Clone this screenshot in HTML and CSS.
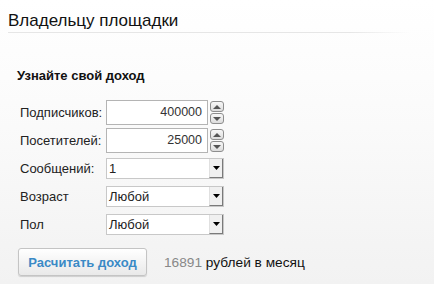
FILE: index.html
```html
<!DOCTYPE html>
<html lang="ru">
<head>
<meta charset="utf-8">
<link rel="stylesheet" href="styles.css">
</head>
<body>
<div class="page">
  <h1 class="title">Владельцу площадки</h1>
  <div class="sep"></div>
  <div class="calc">
    <h2 class="subtitle">Узнайте свой доход</h2>
    <div class="form">
      <div class="row">
        <span class="label">Подписчиков:</span>
        <div class="field">
          <div class="input">400000</div>
          <div class="spin">
            <span class="sbtn"><svg width="8" height="4" viewBox="0 0 8 4"><path d="M0 4 L4 0 L8 4 Z" fill="#555"/></svg></span>
            <span class="sbtn"><svg width="8" height="4" viewBox="0 0 8 4"><path d="M0 0 L4 4 L8 0 Z" fill="#555"/></svg></span>
          </div>
        </div>
      </div>
      <div class="row">
        <span class="label">Посетителей:</span>
        <div class="field">
          <div class="input">25000</div>
          <div class="spin">
            <span class="sbtn"><svg width="8" height="4" viewBox="0 0 8 4"><path d="M0 4 L4 0 L8 4 Z" fill="#555"/></svg></span>
            <span class="sbtn"><svg width="8" height="4" viewBox="0 0 8 4"><path d="M0 0 L4 4 L8 0 Z" fill="#555"/></svg></span>
          </div>
        </div>
      </div>
      <div class="row">
        <span class="label">Сообщений:</span>
        <div class="select"><span class="val v1">1</span><span class="arrow"><svg width="7" height="4" viewBox="0 0 7 4"><path d="M0 0 L7 0 L3.5 4 Z" fill="#000"/></svg></span></div>
      </div>
      <div class="row">
        <span class="label">Возраст</span>
        <div class="select"><span class="val">Любой</span><span class="arrow"><svg width="7" height="4" viewBox="0 0 7 4"><path d="M0 0 L7 0 L3.5 4 Z" fill="#000"/></svg></span></div>
      </div>
      <div class="row">
        <span class="label">Пол</span>
        <div class="select"><span class="val">Любой</span><span class="arrow"><svg width="7" height="4" viewBox="0 0 7 4"><path d="M0 0 L7 0 L3.5 4 Z" fill="#000"/></svg></span></div>
      </div>
    </div>
    <div class="result">
      <button class="btn">Расчитать доход</button>
      <span class="sum"><span class="num">16891</span> рублей в месяц</span>
    </div>
  </div>
</div>
</body>
</html>
```
FILE: styles.css
```css
html, body {
  margin: 0;
  padding: 0;
}
body {
  width: 434px;
  height: 284px;
  background: linear-gradient(to bottom, #ffffff 0%, #fafafa 45%, #f2f2f2 100%);
  font-family: "Liberation Sans", Arial, sans-serif;
  color: #111;
  overflow: hidden;
}
.page {
  padding: 10px 0 0 8px;
}
.title {
  margin: 0;
  font-size: 17px;
  font-weight: normal;
  line-height: 21px;
  color: #111;
}
.sep {
  margin-top: 1px;
  width: 402px;
  height: 1px;
  background: linear-gradient(to right, #e6e6e6 0%, #e6e6e6 85%, rgba(230,230,230,0) 100%);
}
.calc {
  padding: 0 0 0 9px;
}
.subtitle {
  margin: 35px 0 0 0;
  font-size: 13px;
  font-weight: bold;
  line-height: 16px;
  color: #111;
}
.form {
  margin-top: 16px;
  display: flex;
  flex-direction: column;
  gap: 3px;
}
.row {
  display: flex;
  align-items: center;
  height: 25px;
}
.label {
  flex: 0 0 89px;
  padding-left: 3px;
  box-sizing: border-box;
  font-size: 13px;
  color: #222;
  white-space: nowrap;
}
.field {
  display: flex;
  align-items: center;
  gap: 2px;
}
.input {
  width: 102px;
  height: 25px;
  box-sizing: border-box;
  border: 1px solid #b4b4b4;
  background: #fff;
  text-align: right;
  font-size: 12.5px;
  line-height: 23px;
  padding-right: 5px;
  color: #333;
}
.spin {
  display: flex;
  flex-direction: column;
  gap: 1px;
}
.sbtn {
  width: 14px;
  height: 11px;
  box-sizing: border-box;
  border: 1px solid #8e8e8e;
  border-radius: 3px;
  background: linear-gradient(to bottom, #f8f8f8, #dcdcdc);
  display: flex;
  align-items: center;
  justify-content: center;
}
.select {
  width: 118px;
  height: 21px;
  box-sizing: border-box;
  border: 1px solid #c8c8c8;
  background: #fff;
  display: flex;
  align-items: stretch;
}
.val {
  flex: 1;
  font-size: 13px;
  line-height: 19px;
  padding-left: 2px;
  color: #222;
}
.arrow {
  width: 14px;
  background: #f0f0f0;
  border-left: 1px solid #e0e0e0;
  border-right: 1px solid #7a7a7a;
  border-bottom: 1px solid #7a7a7a;
  box-sizing: border-box;
  display: flex;
  align-items: center;
  justify-content: center;
}
.result {
  margin-top: 11px;
  display: flex;
  align-items: center;
  gap: 17px;
}
.btn {
  margin-left: 1px;
  width: 129px;
  height: 28px;
  border: 1px solid #c4c4c4;
  border-radius: 3px;
  background: linear-gradient(to bottom, #ffffff, #e9e9e9);
  box-shadow: 0 1px 1px rgba(0,0,0,0.15);
  font-family: "Liberation Sans", Arial, sans-serif;
  font-size: 13px;
  font-weight: bold;
  color: #3a8ac6;
  padding: 0;
}
.sum {
  font-size: 13.7px;
  color: #111;
}
.num {
  color: #888;
}
```
